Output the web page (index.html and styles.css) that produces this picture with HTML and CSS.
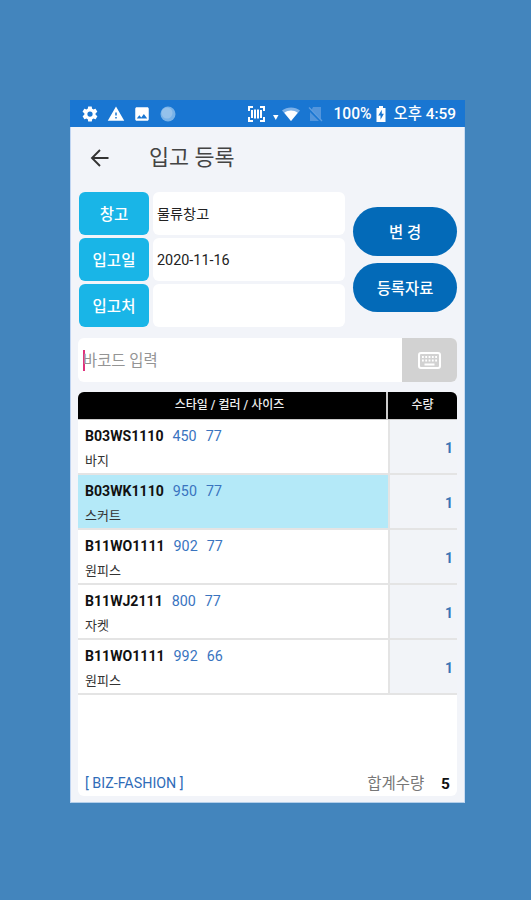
FILE: index.html
```html
<!DOCTYPE html>
<html lang="ko">
<head>
    <meta charset="UTF-8">
    <meta name="viewport" content="width=device-width, initial-scale=1.0">
    <title>입고 등록</title>
    <link rel="stylesheet" href="styles.css">
</head>
<body>
    <div class="phone">
        <div class="status-bar">
            <div class="status-left">
                <svg width="18" height="18" viewBox="0 0 24 24" fill="#fff"><path d="M19.4 13c0-.3.1-.6.1-1s0-.7-.1-1l2.1-1.6c.2-.2.3-.4.1-.7l-2-3.4c-.1-.2-.4-.3-.6-.2l-2.5 1c-.5-.4-1.100-.7-1.700-1l-.4-2.600c0-.2-.2-.4-.5-.4h-4c-.2 0-.4.2-.5.4L9 5.100c-.6.3-1.100.6-1.700 1l-2.500-1c-.2-.1-.5 0-.6.2l-2 3.400c-.1.2-.1.5.1.7L4.500 11c0 .3-.1.600-.1 1s0 .7.1 1l-2.100 1.600c-.2.2-.2.400-.1.700l2 3.400c.1.200.4.300.6.200l2.500-1c.5.4 1.100.7 1.700 1l.4 2.600c0 .2.2.4.5.4h4c.2 0 .4-.2.500-.4l.4-2.600c.6-.3 1.100-.6 1.700-1l2.500 1c.2.1.5 0 .6-.2l2-3.400c.1-.2.1-.5-.1-.7zM12 15.500a3.500 3.500 0 1 1 0-7 3.500 3.500 0 0 1 0 7z"/></svg>
                <svg width="18" height="18" viewBox="0 0 24 24" fill="#fff"><path d="M1 21h22L12 2zm12-3h-2v-2h2zm0-4h-2v-4h2z"/></svg>
                <svg width="18" height="18" viewBox="0 0 24 24" fill="#fff"><path d="M21 19V5c0-1.100-.9-2-2-2H5c-1.100 0-2 .9-2 2v14c0 1.100.9 2 2 2h14c1.100 0 2-.9 2-2zM8.500 13.500l2.500 3 3.500-4.500 4.500 6H5z"/></svg>
                <svg width="16" height="16" viewBox="0 0 16 16"><circle cx="8" cy="8" r="7.500" fill="#78b2e8"/><circle cx="7" cy="7" r="5.500" fill="#94c1eb"/></svg>
            </div>
            <div class="status-right">
                <svg class="scan" width="17" height="16" viewBox="0 0 17 16" fill="none" stroke="#fff"><path d="M5 1H1v4M12 1h4v4M5 15H1v-4M12 15h4v-4" stroke-width="2"/><path d="M4 4v8M7 3.500v9M10 3.500v9M13 4v8" stroke-width="2"/></svg>
                <svg class="wifi" width="27" height="16" viewBox="0 0 27 16"><path d="M0 9h5.500L2.800 14z" fill="#fff"/><path d="M9 4.500C14 .5 22 .5 27 4.500L18 15z" fill="#7eb2e8"/><path d="M11.300 6.700c4-3 9.400-3 13.400 0L18 15z" fill="#fff"/></svg>
                <svg class="sim" width="15" height="16" viewBox="0 0 15 16"><path d="M5 1h8v12.500L3.500 4zM2 6l9 9H2z" fill="#5295dc"/><path d="M1 1.500L14 15" stroke="#5d9de0" stroke-width="1.300"/></svg>
                <span class="battery-text">100%</span>
                <svg class="battery" width="10" height="16" viewBox="0 0 10 16"><path d="M3 0h4v2h2.500v14h-9V2H3z" fill="#fff"/><path d="M5.800 3.800L2.300 9.500h2.200v4.200l3.400-5.900H5.800z" fill="#1976d2"/></svg>
                <span class="time">오후 4:59</span>
            </div>
        </div>

        <div class="toolbar">
            <svg width="20" height="18" viewBox="0 0 20 18" fill="none" stroke="#333" stroke-width="1.900"><path d="M18.500 9H2.500M10 1L2 9l8 8"/></svg>
            <h1>입고 등록</h1>
        </div>

        <div class="info">
            <div class="fields">
                <div class="field">
                    <div class="label">창고</div>
                    <div class="value">물류창고</div>
                </div>
                <div class="field">
                    <div class="label">입고일</div>
                    <div class="value date">2020-11-16</div>
                </div>
                <div class="field">
                    <div class="label">입고처</div>
                    <div class="value"></div>
                </div>
            </div>
            <div class="buttons">
                <button type="button">변 경</button>
                <button type="button">등록자료</button>
            </div>
        </div>

        <div class="barcode">
            <div class="barcode-input"><span>바코드 입력</span></div>
            <div class="keyboard">
                <svg width="23" height="17" viewBox="0 0 23 17"><rect x="1" y="1" width="21" height="15" rx="2" fill="#d2d2d2" stroke="#fff" stroke-width="2"/><path d="M4 5h15M4 8.500h15" stroke="#fff" stroke-width="1.800" stroke-dasharray="1.800 1.500"/><path d="M6.500 12.500h10" stroke="#fff" stroke-width="2"/></svg>
            </div>
        </div>

        <div class="list">
            <div class="list-head">
                <div class="head-style">스타일 / 컬러 / 사이즈</div>
                <div class="head-qty">수량</div>
            </div>
            <div class="row">
                <div class="item">
                    <div class="code"><b>B03WS1110</b><span>450</span><span>77</span></div>
                    <div class="name">바지</div>
                </div>
                <div class="qty">1</div>
            </div>
            <div class="row selected">
                <div class="item">
                    <div class="code"><b>B03WK1110</b><span>950</span><span>77</span></div>
                    <div class="name">스커트</div>
                </div>
                <div class="qty">1</div>
            </div>
            <div class="row">
                <div class="item">
                    <div class="code"><b>B11WO1111</b><span>902</span><span>77</span></div>
                    <div class="name">원피스</div>
                </div>
                <div class="qty">1</div>
            </div>
            <div class="row">
                <div class="item">
                    <div class="code"><b>B11WJ2111</b><span>800</span><span>77</span></div>
                    <div class="name">자켓</div>
                </div>
                <div class="qty">1</div>
            </div>
            <div class="row">
                <div class="item">
                    <div class="code"><b>B11WO1111</b><span>992</span><span>66</span></div>
                    <div class="name">원피스</div>
                </div>
                <div class="qty">1</div>
            </div>
            <div class="list-footer">
                <div class="brand">[ BIZ-FASHION ]</div>
                <div class="total">합계수량 <b>5</b></div>
            </div>
        </div>
    </div>
</body>
</html>
```
FILE: styles.css
```css
* {
    box-sizing: border-box;
}

body {
    margin: 0;
    height: 900px;
    padding: 100px 66px 0 70px;
    background-color: #4385bd;
    font-family: Roboto, "Noto Sans CJK KR", sans-serif;
    color: #222;
}

.phone {
    display: flex;
    flex-direction: column;
    height: 703px;
    background-color: #f2f4f9;
    border-right: 1px solid #c9dcf2;
    border-left: 1px solid #c0d5f2;
    border-bottom: 1px solid #b4cfea;
}

.status-bar {
    display: flex;
    justify-content: space-between;
    align-items: center;
    height: 27px;
    margin: 0 -1px;
    padding: 1px 9px 0 11px;
    background-color: #1976d2;
    color: #fff;
}

.status-left, .status-right {
    display: flex;
    align-items: center;
}

.status-left {
    gap: 8px;
}

.status-left svg:last-child {
    margin-left: 1px;
}

.scan {
    margin-right: -1px;
}

.wifi {
    margin-left: 9px;
}

.sim {
    margin-left: 8px;
}

.battery-text {
    margin-left: 10px;
    font-size: 15.600px;
    font-weight: 500;
    line-height: 20px;
}

.battery {
    margin-left: 4px;
}

.time {
    margin-left: 8px;
    font-size: 15.400px;
    font-weight: 500;
    line-height: 20px;
    white-space: nowrap;
}

.toolbar {
    display: flex;
    align-items: center;
    height: 65px;
    padding: 0 0 4px 19px;
}

.toolbar h1 {
    margin: 0 0 0 39px;
    font-size: 21.800px;
    font-weight: 400;
    line-height: 30px;
    color: #444;
}

.info {
    display: flex;
    justify-content: space-between;
    padding: 0 7px 0 8px;
}

.fields {
    display: flex;
    flex-direction: column;
    gap: 3px;
}

.field {
    display: flex;
    gap: 4px;
}

.label, .value {
    display: flex;
    align-items: center;
    height: 43px;
    border-radius: 6px;
}

.label {
    justify-content: center;
    width: 70px;
    padding-bottom: 1px;
    background-color: #19b5e7;
    color: #fff;
    font-size: 15.500px;
    font-weight: 500;
}

.value {
    width: 192px;
    padding: 0 0 1px 4px;
    background-color: #fff;
    font-size: 14.200px;
}

.date {
    padding: 2px 0 0 4px;
    font-size: 14.400px;
}

.buttons {
    display: flex;
    flex-direction: column;
    gap: 7px;
    padding-top: 15px;
}

.buttons button {
    width: 104px;
    height: 49px;
    padding: 0 0 2px;
    border: none;
    border-radius: 25px;
    background-color: #036ab8;
    color: #fff;
    font-family: inherit;
    font-size: 15.400px;
    font-weight: 500;
}

.barcode {
    display: flex;
    height: 44px;
    margin: 11px 7px 10px;
    border-radius: 6px;
    overflow: hidden;
    background-color: #fff;
}

.barcode-input {
    flex: 1;
    display: flex;
    align-items: center;
    padding-left: 5px;
}

.barcode-input span {
    height: 21px;
    border-left: 2px solid #e0307c;
    font-size: 15.400px;
    line-height: 23px;
    text-indent: -2px;
    color: #949494;
}

.keyboard {
    display: flex;
    justify-content: center;
    align-items: center;
    width: 55px;
    background-color: #d2d2d2;
}

.list {
    flex: 1;
    display: flex;
    flex-direction: column;
    margin: 0 7px 6px;
    border-radius: 6px;
    overflow: hidden;
    background-color: #fff;
}

.list-head {
    display: flex;
    gap: 2px;
    height: 28px;
    background-color: #ccc;
    border-bottom: 1px solid #ccc;
    color: #eee;
    font-size: 12px;
    font-weight: 500;
    line-height: 27px;
    text-align: center;
}

.head-style {
    width: 308px;
    padding-right: 5px;
    background-color: #000;
}

.head-qty {
    flex: 1;
    background-color: #000;
}

.row {
    display: flex;
    height: 55px;
    border-bottom: 2px solid #e4e4e4;
}

.item {
    width: 312px;
    padding: 6px 0 0 7px;
    border-right: 2px solid #e4e4e4;
}

.selected .item {
    background-color: #b4e9f8;
}

.code {
    display: flex;
    gap: 9px;
    height: 20px;
    font-size: 14.300px;
    line-height: 20px;
    color: #3a74bf;
}

.code b {
    color: #111;
    font-size: 14.100px;
}

.name {
    margin-top: 5px;
    font-size: 13px;
    line-height: 20px;
    color: #333;
}

.qty {
    flex: 1;
    padding: 2px 4px 0 0;
    background-color: #f2f4f8;
    color: #3a74b5;
    font-size: 14px;
    font-weight: bold;
    line-height: 53px;
    text-align: right;
}

.list-footer {
    display: flex;
    justify-content: space-between;
    align-items: center;
    margin-top: auto;
    height: 27px;
    padding: 0 7px 1px;
}

.brand {
    padding-top: 2px;
    font-size: 14.300px;
    color: #2f6cb8;
}

.total {
    font-size: 15.500px;
    color: #777;
}

.total b {
    margin-left: 13px;
    color: #111;
}
```
